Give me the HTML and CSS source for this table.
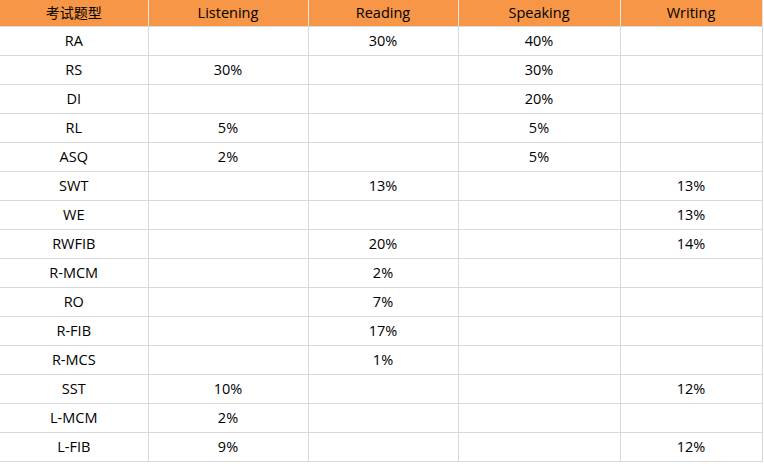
FILE: index.html
```html
<!DOCTYPE html>
<html lang="zh">
<head>
<meta charset="utf-8">
<link rel="stylesheet" href="styles.css">
</head>
<body>
<table class="grid">
  <colgroup>
    <col class="c1"><col class="c2"><col class="c3"><col class="c4"><col class="c5">
  </colgroup>
  <thead>
    <tr><th>考试题型</th><th>Listening</th><th>Reading</th><th>Speaking</th><th>Writing</th></tr>
  </thead>
  <tbody>
    <tr><td>RA</td><td></td><td>30%</td><td>40%</td><td></td></tr>
    <tr><td>RS</td><td>30%</td><td></td><td>30%</td><td></td></tr>
    <tr><td>DI</td><td></td><td></td><td>20%</td><td></td></tr>
    <tr><td>RL</td><td>5%</td><td></td><td>5%</td><td></td></tr>
    <tr><td>ASQ</td><td>2%</td><td></td><td>5%</td><td></td></tr>
    <tr><td>SWT</td><td></td><td>13%</td><td></td><td>13%</td></tr>
    <tr><td>WE</td><td></td><td></td><td></td><td>13%</td></tr>
    <tr><td>RWFIB</td><td></td><td>20%</td><td></td><td>14%</td></tr>
    <tr><td>R-MCM</td><td></td><td>2%</td><td></td><td></td></tr>
    <tr><td>RO</td><td></td><td>7%</td><td></td><td></td></tr>
    <tr><td>R-FIB</td><td></td><td>17%</td><td></td><td></td></tr>
    <tr><td>R-MCS</td><td></td><td>1%</td><td></td><td></td></tr>
    <tr><td>SST</td><td>10%</td><td></td><td></td><td>12%</td></tr>
    <tr><td>L-MCM</td><td>2%</td><td></td><td></td><td></td></tr>
    <tr><td>L-FIB</td><td>9%</td><td></td><td></td><td>12%</td></tr>
  </tbody>
</table>
</body>
</html>
```

FILE: styles.css
```css
html, body {
  margin: 0;
  padding: 0;
  background: #ffffff;
}

.grid {
  border-collapse: collapse;
  table-layout: fixed;
  width: 762px;
  font-family: "Open Sans", "Noto Sans CJK SC", sans-serif;
  font-size: 14.5px;
  color: #000000;
}

.c1 { width: 148px; }
.c2 { width: 160px; }
.c3 { width: 150px; }
.c4 { width: 162px; }
.c5 { width: 142px; }

.grid th,
.grid td {
  padding: 0;
  text-align: center;
  border-right: 1px solid #d9d9d9;
  border-bottom: 1px solid #d9d9d9;
  line-height: 18px;
}

.grid th {
  height: 26px;
  font-weight: normal;
  font-size: 14px;
  background: #f79646;
  border-right-color: #e8e8e8;
}

.grid th:not(:first-child) {
  font-size: 14.5px;
}

.grid td {
  height: 28px;
}
```
